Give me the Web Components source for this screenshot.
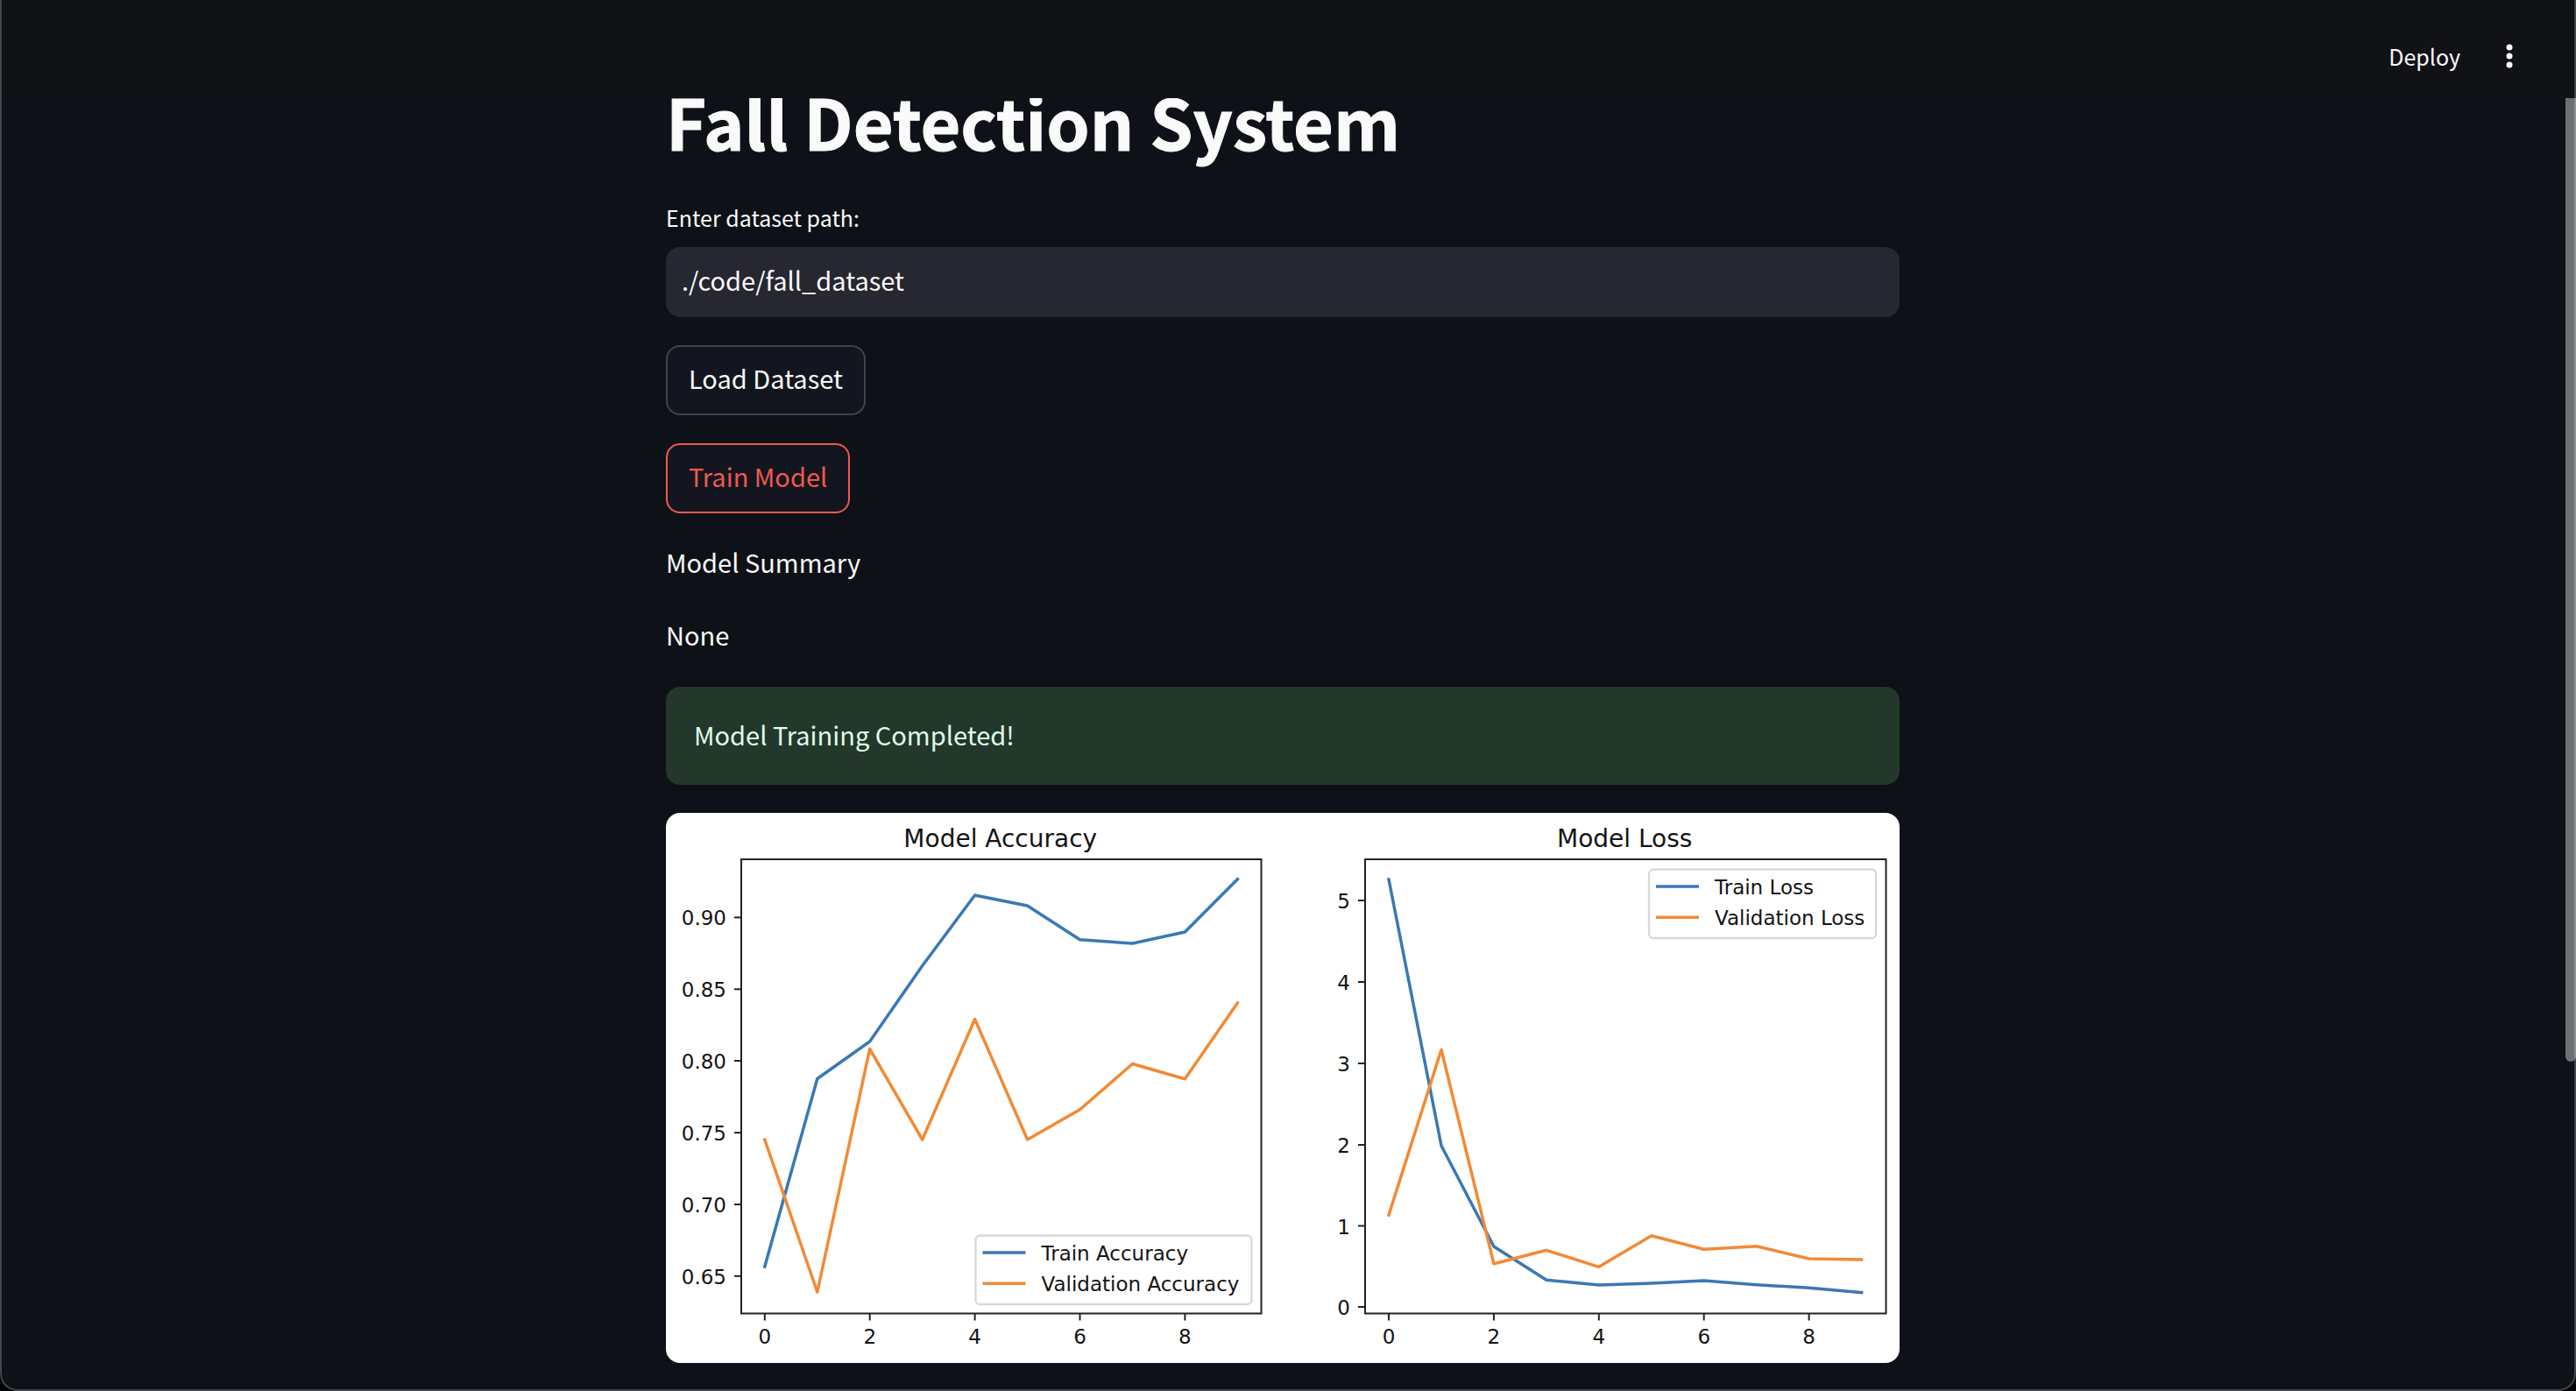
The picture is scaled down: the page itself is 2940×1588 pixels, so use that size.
<!DOCTYPE html>
<html lang="en">
<head>
<meta charset="utf-8">
<title>Fall Detection System</title>
<style>
  html { background: #000; }
  body {
    margin: 0;
    min-height: 100vh;
    overflow: hidden;
    color: #fafafa;
    font: 400 29px/52px "Noto Sans CJK SC", "Noto Sans", sans-serif;
  }
</style>
</head>
<body>
<app-window>
  <app-toolbar slot="toolbar"></app-toolbar>
  <page-title>Fall Detection System</page-title>
  <text-field label="Enter dataset path:" value="./code/fall_dataset"></text-field>
  <action-button>Load Dataset</action-button>
  <action-button active>Train Model</action-button>
  <text-line>Model Summary</text-line>
  <text-line>None</text-line>
  <status-alert>Model Training Completed!</status-alert>
  <history-figure></history-figure>
</app-window>

<script>
const define = (name, html, setup) => {
  const template = document.createElement('template');
  template.innerHTML = html;
  customElements.define(name, class extends HTMLElement {
    constructor() {
      super();
      this.attachShadow({ mode: 'open' }).append(template.content.cloneNode(true));
    }
    connectedCallback() { if (setup) setup(this, this.shadowRoot); }
  });
};

define('app-window', `
  <style>
    :host { display: block; position: relative; height: 100vh; box-sizing: border-box; background: #0e1117;
      border-radius: 0 0 20px 20px; overflow: hidden; }
    main { box-sizing: border-box; padding: 82px 44px 32px 32px; }
    .column { display: flex; flex-direction: column; align-items: stretch; gap: 32px; max-width: 1408px; margin: 0 auto; }
    .thumb { position: absolute; top: 112px; right: 0; width: 12px; height: calc((100vh - 112px) * .745);
      background: #6e6f73; border-radius: 0 0 6px 6px; }
    .frame { position: absolute; inset: 0; z-index: 2; border: solid rgba(255,255,255,.22); border-width: 0 2px 2px;
      border-radius: 0 0 20px 20px; pointer-events: none; }
  </style>
  <slot name="toolbar"></slot>
  <main><div class="column"><slot></slot></div></main>
  <div class="thumb"></div>
  <div class="frame"></div>`);

define('app-toolbar', `
  <style>
    :host { position: absolute; inset: 0 0 auto; z-index: 1; box-sizing: border-box; height: 112px; padding: 16px 60px 0 0;
      display: flex; align-items: center; justify-content: flex-end; gap: 40px; background: #111216; }
    button { all: unset; display: block; font-size: 25px; line-height: 44px; }
    .menu { display: flex; justify-content: center; width: 32px; }
    svg { display: block; }
  </style>
  <button type="button">Deploy</button>
  <button type="button" class="menu" aria-label="Main menu">
    <svg width="32" height="32" viewBox="0 0 32 32" fill="#fafafa">
      <circle cx="16" cy="6" r="3.5"/><circle cx="16" cy="16" r="3.5"/><circle cx="16" cy="26" r="3.5"/>
    </svg>
  </button>`);

define('page-title', `
  <style>
    :host { display: block; }
    h1 { margin: 0; font-size: 79px; line-height: 112px; font-weight: 700; -webkit-text-stroke: 1px currentColor; }
  </style>
  <h1><slot></slot></h1>`);

define('text-field', `
  <style>
    :host { display: flex; flex-direction: column; gap: 12px; }
    label { font-size: 25px; line-height: 44px; }
    input { box-sizing: border-box; width: 100%; height: 80px; margin: 0; padding: 0 18px 6px; border: 0; border-radius: 16px;
      background: #262730; color: inherit; font: inherit; outline: 0; }
  </style>
  <label for="field"></label>
  <input id="field" type="text">`, (host, root) => {
  root.querySelector('label').textContent = host.getAttribute('label');
  root.querySelector('input').value = host.getAttribute('value');
});

define('action-button', `
  <style>
    :host { display: flex; }
    button { box-sizing: border-box; margin: 0; padding: 9px 24px 15px; border: 2px solid #41434a; border-radius: 16px;
      background: #13161f; color: inherit; font: inherit; }
    :host([active]) button { border-color: #ee5951; color: #ee5951; }
  </style>
  <button type="button"><slot></slot></button>`);

define('text-line', `
  <style>
    :host { display: block; }
    p { margin: 0; padding-bottom: 5px; line-height: 46px; }
  </style>
  <p><slot></slot></p>`);

define('status-alert', `
  <style>
    :host { display: block; padding: 28px 32px 32px; border-radius: 16px; background: #23372b; color: #dffde9; }
  </style>
  <div role="status"><slot></slot></div>`);

define('history-figure', `
  <style>
    :host { display: block; background: #fff; border-radius: 16px; overflow: hidden; }
    svg { display: block; width: 100%; height: auto; font-family: "DejaVu Sans", sans-serif; font-size: 23px; fill: #141414; }
    .title { font-size: 28px; text-anchor: middle; }
    .x { text-anchor: middle; }
    .y { text-anchor: end; }
    .axis { fill: none; stroke: #222; stroke-width: 2; }
    .box { fill: #fff; stroke: #d8d8d8; stroke-width: 2.3; }
    .line { fill: none; stroke-width: 3.5; stroke-linejoin: round; stroke-linecap: square; }
    .key { stroke-linecap: butt; }
    .train { stroke: #3b78b4; }
    .valid { stroke: #f28a35; }
  </style>
  <svg viewBox="0 0 1408 628" role="img" aria-label="Training history"></svg>`, (host, root) => {
  const plots = [
    { title: 'Model Accuracy', left: 86, right: 679.5, x0: 112.8,
      ticks: [['0.90', 119.4], ['0.85', 201.3], ['0.80', 283], ['0.75', 365.1], ['0.70', 447], ['0.65', 528.8]],
      train: [518, 303.5, 261, 174.5, 94, 106, 144.7, 149, 136, 75.7],
      valid: [373, 547, 269.5, 373, 235.5, 373, 338.7, 286.5, 303.7, 217],
      legend: { x: 353.5, y: 482.5, w: 315, names: ['Train Accuracy', 'Validation Accuracy'] } },
    { title: 'Model Loss', left: 798, right: 1392.5, x0: 825,
      ticks: [['5', 100], ['4', 193], ['3', 286], ['2', 379], ['1', 471.5], ['0', 564]],
      train: [76, 380, 495, 533.3, 539, 537, 534, 538.7, 542.3, 547.7],
      valid: [459, 270.5, 514.7, 499.3, 518.3, 482.7, 498.3, 494.7, 509, 510],
      legend: { x: 1122, y: 64.5, w: 259, names: ['Train Loss', 'Validation Loss'] } }
  ];
  const top = 53, bottom = 571.5, step = 59.95;
  root.querySelector('svg').innerHTML = plots.map(p => {
    const points = values => values.map((y, i) => (p.x0 + i * step).toFixed(1) + ',' + y).join(' ');
    const g = p.legend;
    return `
      <text class="title" x="${(p.left + p.right) / 2 - 1}" y="39">${p.title}</text>
      ${p.ticks.map(([label, y]) => `
        <path class="axis" d="M${p.left - 8} ${y}H${p.left}"/>
        <text class="y" x="${p.left - 17}" y="${y + 9}">${label}</text>`).join('')}
      ${[0, 2, 4, 6, 8].map(n => `
        <path class="axis" d="M${p.x0 + n * step} ${bottom}v8"/>
        <text class="x" x="${p.x0 + n * step}" y="606">${n}</text>`).join('')}
      <polyline class="line train" points="${points(p.train)}"/>
      <polyline class="line valid" points="${points(p.valid)}"/>
      <rect class="axis" x="${p.left}" y="${top}" width="${p.right - p.left}" height="${bottom - top}"/>
      <rect class="box" x="${g.x}" y="${g.y}" width="${g.w}" height="78.5" rx="5"/>
      ${g.names.map((name, i) => `
        <path class="line key ${i ? 'valid' : 'train'}" d="M${g.x + 8} ${g.y + 19.5 + i * 35.3}h49"/>
        <text x="${g.x + 75}" y="${g.y + 28 + i * 35.3}">${name}</text>`).join('')}`;
  }).join('');
});
</script>
</body>
</html>
